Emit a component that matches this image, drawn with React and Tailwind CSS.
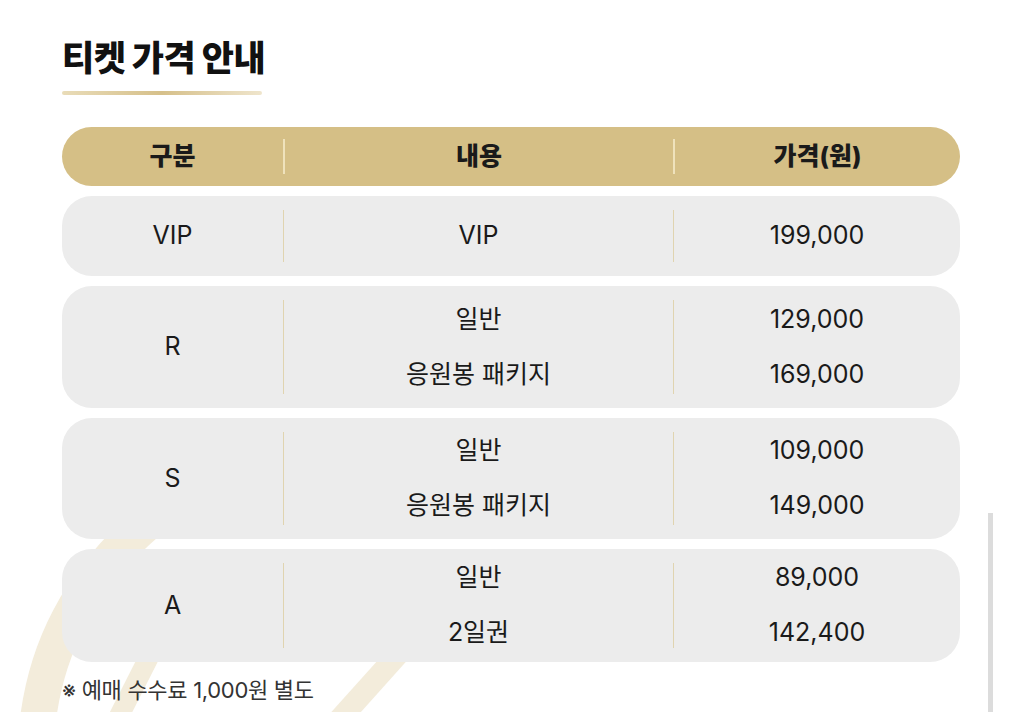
const rows = [
  { grade: "VIP", h: "h-[80px]", items: [["VIP", "199,000"]] },
  {
    grade: "R",
    h: "h-[122px]",
    items: [
      ["일반", "129,000"],
      ["응원봉 패키지", "169,000"],
    ],
  },
  {
    grade: "S",
    h: "h-[121px]",
    items: [
      ["일반", "109,000"],
      ["응원봉 패키지", "149,000"],
    ],
  },
  {
    grade: "A",
    h: "h-[113px]",
    items: [
      ["일반", "89,000"],
      ["2일권", "142,400"],
    ],
  },
];

const Deco = () => (
  <svg
    className="absolute left-0 top-0 w-[1024px] h-[712px] z-0"
    viewBox="0 0 1024 712"
    fill="none"
  >
    <path
      d="M36 740 C 42 650, 80 580, 150 520"
      stroke="#f3ecdb"
      strokeWidth="36"
      strokeLinecap="round"
    />
    <path d="M112 730 L 150 655" stroke="#f3ecdb" strokeWidth="20" />
    <path d="M400 652 L 330 730" stroke="#f3ecdb" strokeWidth="22" />
  </svg>
);

const Divider = ({ head }) =>
  head ? (
    <div className="w-[2px] self-stretch my-[12px] bg-[#efe2bc]" />
  ) : (
    <div className="w-px self-stretch my-[14px] bg-[#e0d4b0]" />
  );

const Row = ({ row }) => (
  <div className={`flex rounded-[30px] bg-[#ececec] ${row.h}`}>
    <div className="w-[221px] flex items-center justify-center">{row.grade}</div>
    <Divider />
    <div className="w-[389px] flex flex-col justify-center items-center">
      {row.items.map((it) => (
        <div key={it[0]} className="h-[55px] shrink-0 flex items-center">
          {it[0]}
        </div>
      ))}
    </div>
    <Divider />
    <div className="flex-1 flex flex-col justify-center items-center">
      {row.items.map((it) => (
        <div key={it[1]} className="h-[55px] shrink-0 flex items-center">
          {it[1]}
        </div>
      ))}
    </div>
  </div>
);

export default function App() {
  return (
    <div
      className="relative w-[1024px] h-[712px] overflow-hidden bg-white text-[#1a1a1a]"
      style={{ fontFamily: 'Inter, "Noto Sans CJK KR", sans-serif' }}
    >
      <Deco />
      <div className="relative z-10 pl-[62px] pt-[34px] w-[960px]">
        <h1 className="text-[35px] font-black tracking-[-0.5px] leading-[48px] text-[#111]">
          티켓 가격 안내
        </h1>
        <div className="mt-[9px] w-[200px] h-[4px] rounded-full bg-gradient-to-r from-[#e9dcb8] via-[#d6c08a] to-[#efe5cc]" />
        <div className="mt-[32px] flex flex-col gap-[10px] text-[25px]">
          <div className="flex h-[59px] rounded-full bg-[#d5bf86] font-extrabold text-[#1a1a1a]">
            <div className="w-[221px] flex items-center justify-center">구분</div>
            <Divider head />
            <div className="w-[388px] flex items-center justify-center">내용</div>
            <Divider head />
            <div className="flex-1 flex items-center justify-center">가격(원)</div>
          </div>
          {rows.map((r) => (
            <Row key={r.grade} row={r} />
          ))}
        </div>
        <p className="mt-[12px] text-[22px] text-[#333] tracking-[-0.3px]">
          ※ 예매 수수료 1,000원 별도
        </p>
      </div>
      <div className="absolute left-[988px] top-[513px] w-[5px] h-[199px] bg-[#dcdcdc]" />
    </div>
  );
}
